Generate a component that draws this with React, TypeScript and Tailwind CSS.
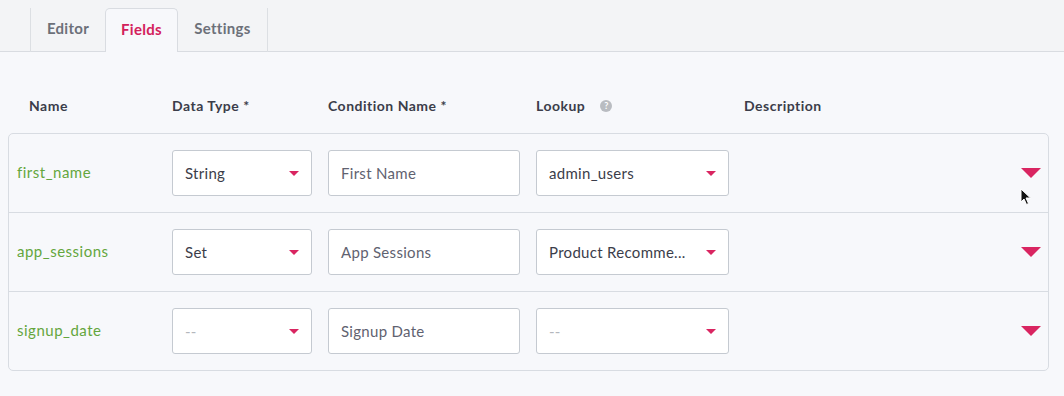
import React from "react";

const font = { fontFamily: "Lato, 'Open Sans', sans-serif" };

function Caret({ big = false }: { big?: boolean }) {
  return big ? (
    <svg width="20" height="10" viewBox="0 0 20 10" className="shrink-0">
      <polygon points="0,0 20,0 10,10" fill="#d92561" />
    </svg>
  ) : (
    <svg width="10" height="5" viewBox="0 0 10 5" className="shrink-0">
      <polygon points="0,0 10,0 5,5" fill="#d92561" />
    </svg>
  );
}

function Select({ value, w, placeholder = false }: { value: string; w: string; placeholder?: boolean }) {
  return (
    <div
      className={`${w} h-[46px] shrink-0 rounded-[3px] border border-[#c5cad1] bg-white flex items-center justify-between pl-3 pr-[12px]`}
    >
      <span className={`text-[15px] tracking-[0.3px] truncate ${placeholder ? "text-[#b4b7bd]" : "text-[#3b3d4a]"}`}>
        {value}
      </span>
      <Caret />
    </div>
  );
}

function Input({ value }: { value: string }) {
  return (
    <div className="w-[192px] h-[46px] shrink-0 rounded-[3px] border border-[#c5cad1] bg-white flex items-center pl-3">
      <span className="text-[15px] tracking-[0.3px] text-[#5f6270]">{value}</span>
    </div>
  );
}

const rows = [
  { name: "first_name", type: "String", cond: "First Name", lookup: "admin_users", tp: false, lp: false },
  { name: "app_sessions", type: "Set", cond: "App Sessions", lookup: "Product Recomme...", tp: false, lp: false },
  { name: "signup_date", type: "--", cond: "Signup Date", lookup: "--", tp: true, lp: true },
];

export default function App() {
  return (
    <div style={font} className="relative w-[1064px] h-[396px] bg-[#f7f8fb] overflow-hidden">
      {/* tab bar */}
      <div className="h-[52px] bg-[#f3f4f6] border-b border-[#d9dce1] flex items-end pl-[30px]">
        <div className="flex h-[44px] -mb-px">
          <div className="w-[75px] border-l border-[#dcdfe3] flex items-center justify-center text-[15px] tracking-[0.3px] font-bold text-[#6c7079] pb-[3px]">
            Editor
          </div>
          <div className="w-[73px] border border-b-0 border-[#d9dce1] rounded-t-[5px] bg-[#f7f8fb] flex items-center justify-center text-[15px] tracking-[0.3px] font-bold text-[#d3215c] pb-[3px]">
            Fields
          </div>
          <div className="w-[90px] border-r border-[#dcdfe3] flex items-center justify-center text-[15px] tracking-[0.3px] font-bold text-[#6c7079] pb-[3px]">
            Settings
          </div>
        </div>
      </div>

      {/* headers */}
      <div className="h-[81px] flex items-center text-[14px] tracking-[0.5px] font-bold text-[#3b3d4a] pt-[26px]">
        <div className="w-[172px] pl-[29px]">Name</div>
        <div className="w-[156px]">Data Type *</div>
        <div className="w-[208px]">Condition Name *</div>
        <div className="w-[208px] flex items-center gap-[15px]">
          <span>Lookup</span>
          <span className="w-[12px] h-[12px] rounded-full bg-[#b9bcc1] text-white text-[9px] leading-[12px] text-center font-bold tracking-normal">
            ?
          </span>
        </div>
        <div>Description</div>
      </div>

      {/* card */}
      <div className="ml-[8px] w-[1041px] border border-[#d8dce2] rounded-[5px] bg-[#f7f8fb]">
        {rows.map((r, i) => (
          <div
            key={r.name}
            className={`flex items-center pl-[8px] pr-[7px] ${i > 0 ? "h-[79px] border-t border-[#d8dce2]" : "h-[78px]"}`}
          >
            <div className="w-[155px] text-[15px] tracking-[0.5px] text-[#64a63d] pb-[2px]">{r.name}</div>
            <Select value={r.type} w="w-[140px]" placeholder={r.tp} />
            <div className="w-[16px]" />
            <Input value={r.cond} />
            <div className="w-[16px]" />
            <Select value={r.lookup} w="w-[193px]" placeholder={r.lp} />
            <div className="flex-1" />
            <Caret big />
          </div>
        ))}
      </div>

      {/* mouse cursor */}
      <svg className="absolute left-[1020px] top-[188px]" width="12" height="18" viewBox="0 0 12 18">
        <path d="M1 1 L1 14 L4 11 L6.5 16.5 L8.5 15.5 L6 10 L10.5 10 Z" fill="#111" stroke="#fff" strokeWidth="1" />
      </svg>
    </div>
  );
}
